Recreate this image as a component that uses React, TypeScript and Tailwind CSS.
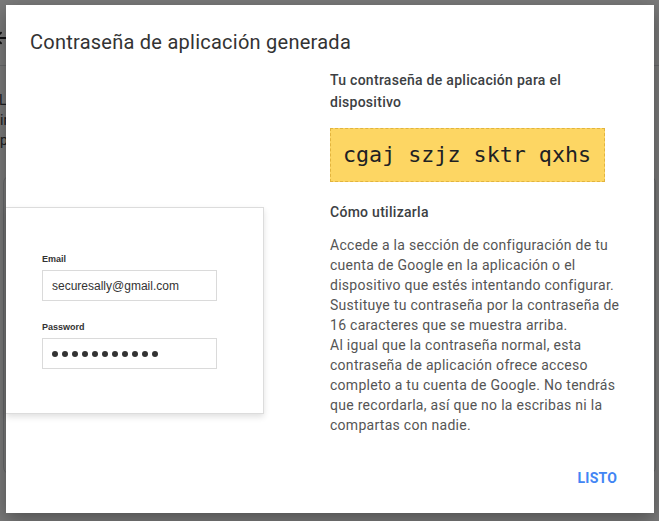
import React from 'react';
import { ArrowLeft } from 'lucide-react';

const roboto = { fontFamily: 'Roboto, "Noto Sans", sans-serif' };

const howToLines = [
    'Accede a la sección de configuración de tu',
    'cuenta de Google en la aplicación o el',
    'dispositivo que estés intentando configurar.',
    'Sustituye tu contraseña por la contraseña de',
    '16 caracteres que se muestra arriba.',
    'Al igual que la contraseña normal, esta',
    'contraseña de aplicación ofrece acceso',
    'completo a tu cuenta de Google. No tendrás',
    'que recordarla, así que no la escribas ni la',
    'compartas con nadie.',
];

const LoginCard: React.FC = () => {
    return (
        <div
            className="w-[258px] h-[207px] bg-white border border-l-0 border-[#dcdcdc] shadow-[0_3px_6px_rgba(0,0,0,0.12)] pl-[36px] pt-[45px]"
            style={{ fontFamily: '"Liberation Sans", Arial, sans-serif' }}
        >
            <div className="text-[9px] leading-[12px] font-bold text-[#333]">Email</div>
            <div className="mt-[5px] w-[175px] h-[31px] border border-[#dadada] flex items-center pl-[9px] text-[12px] text-[#333]">
                securesally@gmail.com
            </div>
            <div className="mt-[20px] text-[9px] leading-[12px] font-bold text-[#333]">Password</div>
            <div className="mt-[5px] w-[175px] h-[31px] border border-[#dadada] flex items-center pl-[9px] gap-[4px]">
                {Array.from({ length: 11 }).map((_, i) => (
                    <span key={i} className="w-[6px] h-[6px] rounded-full bg-[#333]" />
                ))}
            </div>
        </div>
    );
};

const App: React.FC = () => {
    return (
        <div className="relative w-[659px] h-[521px] overflow-hidden bg-white" style={roboto}>
            {/* page behind the overlay */}
            <div className="absolute inset-0 bg-white">
                <div className="h-[66px] border-b border-[#dadce0] flex items-start pt-[29px]">
                    <ArrowLeft className="ml-[-8px] w-[18px] h-[18px] text-[#202124]" strokeWidth={2.5} />
                </div>
                <div className="pt-[24px] text-[14px] leading-[20px] text-[#3c4043]">
                    <div className="-ml-[1px]">Las contraseñas de aplicación te permiten</div>
                    <div>iniciar sesión en tu cuenta de Google</div>
                    <div>publicaciones</div>
                </div>
                <div className="mt-[25px] mx-[3px] h-[300px] rounded-[8px] border border-[#dadce0]" />
            </div>
            <div className="absolute inset-0 bg-[#000]/[0.52]" />

            {/* dialog */}
            <div className="absolute left-[6px] top-[5px] w-[648px] h-[508px] bg-white shadow-[0_6px_18px_rgba(0,0,0,0.35)] flex flex-col">
                <h2 className="pl-[24px] pt-[23px] text-[20px] leading-[28px] tracking-[0.25px] text-[#333] font-normal">
                    Contraseña de aplicación generada
                </h2>
                <div className="flex mt-[13px] tracking-[0.28px]">
                    <div className="w-[324px] shrink-0 pt-[138px] tracking-normal">
                        <LoginCard />
                    </div>
                    <div className="w-[300px]">
                        <div className="text-[14px] leading-[22px] font-medium text-[#3c4043]">
                            Tu contraseña de aplicación para el
                            <br />
                            dispositivo
                        </div>
                        <div className="mt-[15px] w-[275px] h-[54px] bg-[#fdd663] border border-dashed border-[#e2b43e] flex items-center pl-[12px] tracking-normal">
                            <span
                                className="text-[21.7px] text-[#202124] whitespace-pre"
                                style={{ fontFamily: '"DejaVu Sans Mono", "Liberation Mono", monospace' }}
                            >
                                cgaj szjz sktr qxhs
                            </span>
                        </div>
                        <div className="mt-[19px] text-[14px] leading-[22px] font-medium text-[#3c4043]">
                            Cómo utilizarla
                        </div>
                        <div className="mt-[12px] text-[14px] leading-[20px] text-[#555] whitespace-nowrap">
                            {howToLines.map((line) => (
                                <div key={line}>{line}</div>
                            ))}
                        </div>
                    </div>
                </div>
                <div className="mt-auto flex justify-end pr-[29px] pb-[17px]">
                    <button className="h-[36px] px-[8px] text-[14px] font-bold tracking-[0.2px] text-[#4285f4] uppercase">
                        Listo
                    </button>
                </div>
            </div>
        </div>
    );
};

export default App;
